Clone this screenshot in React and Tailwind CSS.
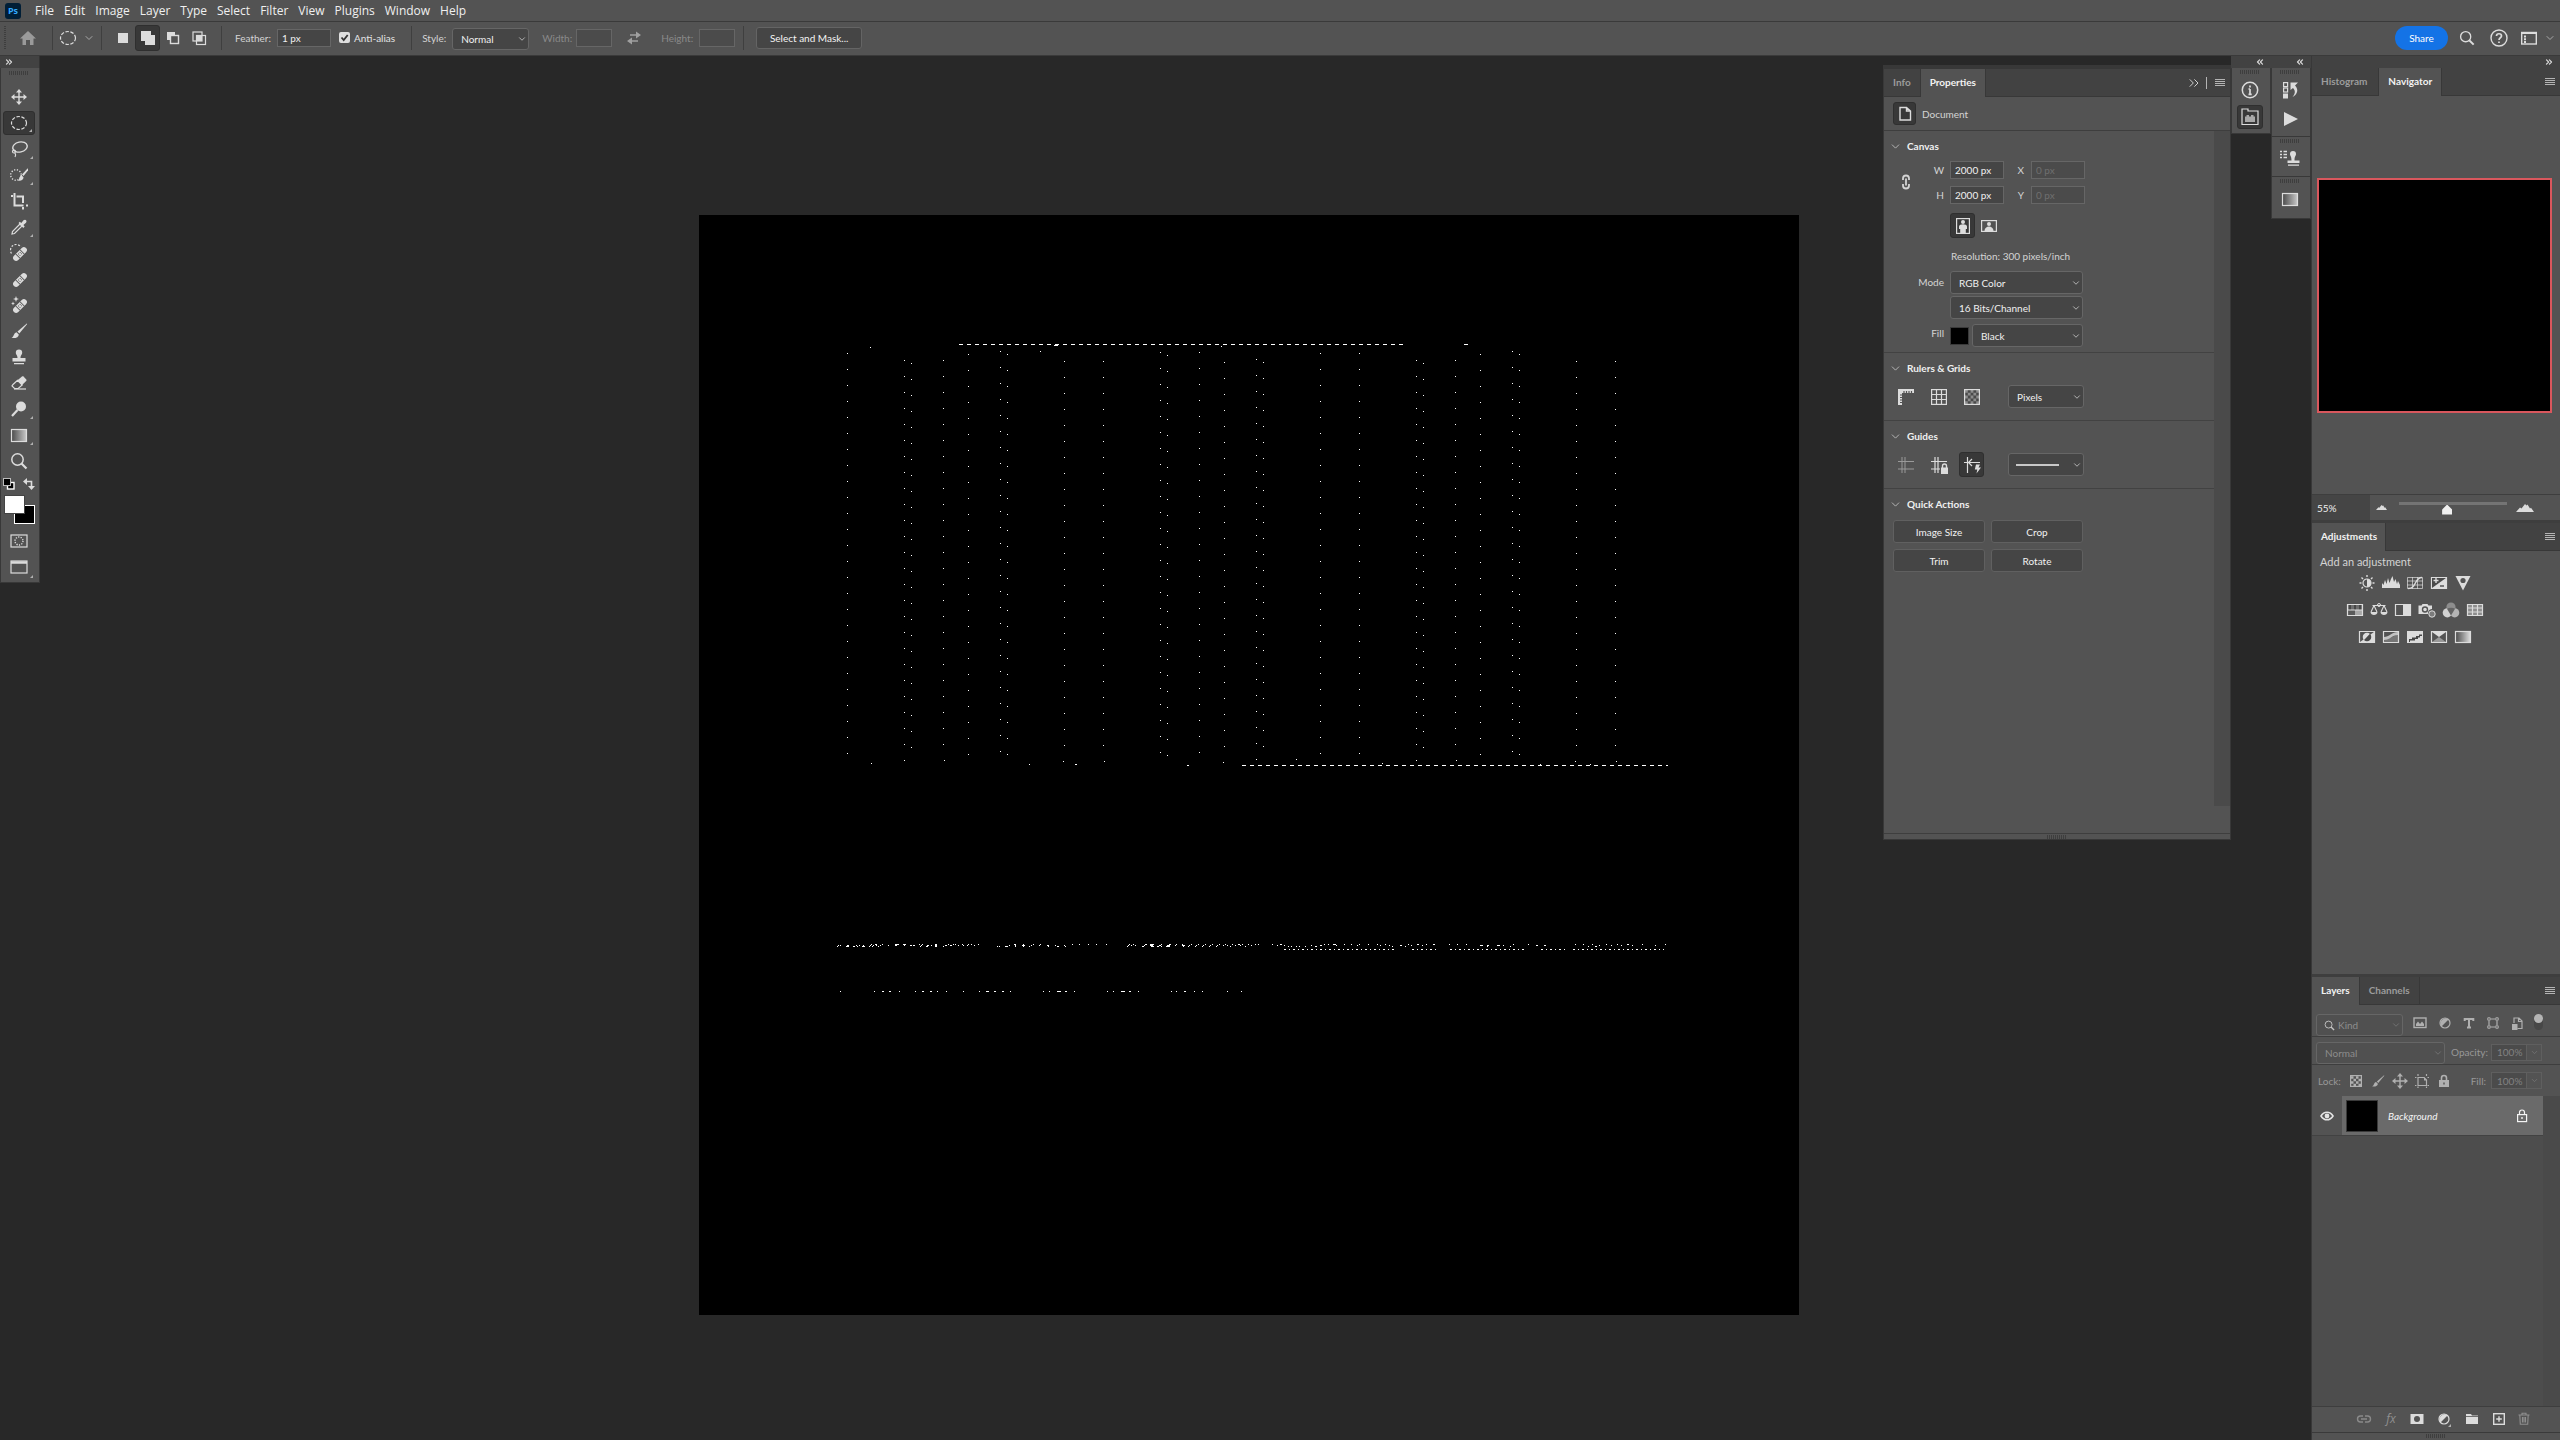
import { ChevronDown, ChevronsLeft, ChevronsRight } from 'lucide-react';

const MENUS = ['File', 'Edit', 'Image', 'Layer', 'Type', 'Select', 'Filter', 'View', 'Plugins', 'Window', 'Help'];

/* ---------- icons ---------- */

const Svg = ({ w = 18, h = 18, box, className = '', children }) => (
  <svg
    width={w}
    height={h}
    viewBox={box || `0 0 ${w} ${h}`}
    fill="none"
    stroke="currentColor"
    strokeWidth="1.4"
    className={`block shrink-0 ${className}`}
    aria-hidden="true"
  >
    {children}
  </svg>
);

const MoveIcon = () => (
  <Svg>
    <path d="M9 3v12M3 9h12" />
    <path d="M9 1l3 3.5H6zM9 17l3-3.5H6zM1 9l3.5-3v6zM17 9l-3.5-3v6z" fill="currentColor" stroke="none" />
  </Svg>
);

const EllipseIcon = () => (
  <Svg>
    <ellipse cx="9" cy="9" rx="7.5" ry="6.5" strokeDasharray="3.4 1.6" strokeWidth="1.2" />
  </Svg>
);

const LassoIcon = () => (
  <Svg>
    <ellipse cx="10" cy="7" rx="7.3" ry="5" transform="rotate(-12 10 7)" />
    <path d="M4 10c-2 0-2 3 0 3s2-3 0-3M5 13c1 1.5 1 2.5 0 4" strokeWidth="1.2" />
  </Svg>
);

const QuickSelectIcon = () => (
  <Svg>
    <circle cx="6" cy="9" r="5.3" strokeDasharray="1.2 1.6" />
    <path d="M17.5 2.5l-5.5 6 1.5 1.5 5-6c.5-1-.2-1.8-1-1.5z" fill="currentColor" stroke="none" />
    <path d="M11.5 9.2l2 2c0 2.5-2.5 4-5.5 3.3 1.5-.8 1.2-4.8 3.5-5.3z" fill="currentColor" stroke="none" />
  </Svg>
);

const CropIcon = () => (
  <Svg>
    <path d="M1 4h2M4.5 1v12.5h9M16 13.5h2M6.5 4.5H13V11M13 15v2.5" strokeWidth="2" />
  </Svg>
);

const DropperIcon = () => (
  <Svg>
    <path d="M10 6L2.5 13.5 2 16l2.5-.5L12 8z" strokeWidth="1.2" />
    <path d="M8.5 5l1.3-1.3 1.5 1.3 2.2-2.7c2-1.5 4 .5 2.5 2.5l-2.6 2.3 1.3 1.4-1.4 1.4z" fill="currentColor" stroke="none" />
  </Svg>
);

const Bandage = () => (
  <g transform="rotate(-45 10 10)">
    <rect x="1.5" y="7" width="17" height="6" rx="3" fill="currentColor" stroke="none" />
    <path d="M7 7v6M13 7v6" stroke="#535353" strokeWidth="1" />
    <path d="M8.5 9h1M10.7 9h1M8.5 11h1M10.7 11h1" stroke="#535353" strokeWidth="1" />
  </g>
);

const SpotHealIcon = () => (
  <Svg>
    <path d="M1.5 9.5a5.5 5.5 0 0 1 9.5-6.5" strokeDasharray="2 1.5" strokeWidth="1.2" />
    <Bandage />
  </Svg>
);

const HealIcon = () => (
  <Svg>
    <Bandage />
  </Svg>
);

const RemoveIcon = () => (
  <Svg>
    <Bandage />
    <path d="M6 0l.8 2.2L9 3l-2.2.8L6 6l-.8-2.2L3 3l2.200-.8zM3 5.5l.6 1.4 1.4.6-1.4.6L3 9.5l-.6-1.4L1 7.5l1.4-.6z" fill="currentColor" stroke="none" />
  </Svg>
);

const BrushIcon = ({ size = 18 }) => (
  <Svg w={size} h={size} box="0 0 18 18">
    <path d="M16.8 1.5L7.5 9.5l1.8 2 7.5-9c.4-.6.3-1 0-1z" fill="currentColor" stroke="none" />
    <path d="M6.5 10.2l2.3 2.3c0 2.8-3 4-7.3 3.5 2.5-1 2-5 5-5.8z" fill="currentColor" stroke="none" />
  </Svg>
);

const StampIcon = () => (
  <Svg>
    <path d="M9 1.5a3.2 3.2 0 0 1 3.2 3.2c0 1.8-1.7 2.2-1.7 5.3H7.5c0-3.1-1.7-3.5-1.7-5.3A3.2 3.2 0 0 1 9 1.5zM2.5 10h13v3.5h-13zM4 15h10v1.2H4z" fill="currentColor" stroke="none" />
  </Svg>
);

const EraserIcon = () => (
  <Svg>
    <path d="M3 10.5l4.5-4.2 4.7 4.7-4 3.5H4.5L2 12z" strokeWidth="1.2" />
    <path d="M7.5 6.3L12 2.5c.5-.4 1-.4 1.5 0l2.8 3c.4.5.4 1-.1 1.5L12 11z" fill="currentColor" stroke="none" />
    <path d="M4 15h12" strokeWidth="1.2" />
  </Svg>
);

const DodgeIcon = () => (
  <Svg>
    <circle cx="11" cy="6.5" r="5" fill="currentColor" stroke="none" />
    <path d="M7.5 10L2 16" strokeWidth="2.2" />
  </Svg>
);

const GradientIcon = ({ id }) => (
  <Svg>
    <defs>
      <linearGradient id={id}>
        <stop offset="0" stopColor="#4a4a4a" />
        <stop offset="1" stopColor="#c8c8c8" />
      </linearGradient>
    </defs>
    <rect x="1.5" y="3.5" width="15" height="12" fill={`url(#${id})`} strokeWidth="1.2" />
  </Svg>
);

const MagnifierIcon = ({ size = 18 }) => (
  <Svg w={size} h={size} box="0 0 18 18">
    <circle cx="7.5" cy="7.5" r="5.7" strokeWidth="1.5" />
    <path d="M11.5 11.5l5 5" strokeWidth="2.2" />
  </Svg>
);

const MaskModeIcon = () => (
  <Svg>
    <rect x="1" y="3" width="16" height="12" strokeWidth="1.2" />
    <circle cx="9" cy="9" r="4" strokeDasharray="1.2 1.3" />
  </Svg>
);

const ScreenIcon = () => (
  <Svg>
    <rect x="1" y="3" width="16" height="12" strokeWidth="1.2" />
    <path d="M1 4.5h16" strokeWidth="2.5" />
  </Svg>
);

const HomeIcon = () => (
  <Svg w={18} h={16}>
    <path d="M9 1L1 8.5h2.5V15H7v-5h4v5h3.5V8.5H17z" fill="currentColor" stroke="none" />
  </Svg>
);

const NewSelIcon = () => (
  <Svg w={16} h={16}>
    <rect x="3" y="3" width="10" height="10" fill="currentColor" stroke="none" />
  </Svg>
);
const AddSelIcon = () => (
  <Svg w={16} h={16}>
    <path d="M1 1h10v4h4v10H5v-4H1z" fill="currentColor" stroke="none" />
  </Svg>
);
const SubSelIcon = () => (
  <Svg w={16} h={16}>
    <path d="M2 2h8v3H5v5H2z" fill="currentColor" stroke="none" />
    <rect x="5.5" y="5.5" width="8" height="8" />
  </Svg>
);
const CrossSelIcon = () => (
  <Svg w={16} h={16}>
    <rect x="2" y="2" width="9" height="9" strokeWidth="1.2" />
    <rect x="5.5" y="5.5" width="9" height="9" strokeWidth="1.2" />
    <rect x="6" y="6" width="5" height="5" fill="currentColor" stroke="none" />
  </Svg>
);

const SwapIcon = () => (
  <Svg w={16} h={14}>
    <path d="M4 4h7M12 10H5" strokeWidth="1.6" />
    <path d="M10 0.5l5 3.5-5 3.5zM6 6.5L1 10l5 3.5z" fill="currentColor" stroke="none" />
  </Svg>
);

const HelpIcon = () => (
  <Svg>
    <circle cx="9" cy="9" r="8" strokeWidth="1.4" />
    <path d="M6.5 7c0-3 5-3 5 0 0 1.800-2.500 1.800-2.500 4M9 12.500v1.500" strokeWidth="1.7" />
  </Svg>
);

const WorkspaceIcon = () => (
  <Svg w={16} h={14}>
    <rect x="0.7" y="1.5" width="14.6" height="11.5" />
    <path d="M1 2h14" strokeWidth="2" />
    <path d="M4 4.5v2M4 7.2v2M4 9.9v2" strokeWidth="2" />
  </Svg>
);

const MenuLines = () => (
  <Svg w={10} h={8}>
    <path d="M0 .5h10M0 2.5h10M0 4.5h10M0 6.5h10" strokeWidth="1" shapeRendering="crispEdges" />
  </Svg>
);

const InfoIcon = () => (
  <Svg>
    <circle cx="9" cy="9" r="7.7" strokeWidth="1.5" />
    <path d="M9 8v5.5M7.5 8H9M7.5 13.3h3.2M9 4.5v2" strokeWidth="1.7" />
  </Svg>
);

const BricksIcon = () => (
  <Svg>
    <path d="M1 1h6v2h10v13.5H1z" strokeWidth="1.2" />
    <path d="M4 14V8.5h1.5V7H8v1.5h2V7h2.5v1.5H14V14z" fill="#a8a8a8" stroke="none" />
  </Svg>
);

const HistoryIcon = () => (
  <Svg>
    <rect x="2.6" y="1.6" width="4" height="4" strokeWidth="1.2" />
    <rect x="2.6" y="7" width="4" height="4" strokeWidth="1.2" />
    <rect x="2" y="12.5" width="5" height="5" fill="currentColor" stroke="none" />
    <path d="M9.5 1.5h7.5L14 4.5c4 4 2.5 9-2.5 11.5 3-3.5 3-6.5.5-9l-2.5 2z" fill="currentColor" stroke="none" />
  </Svg>
);

const PlayIcon = () => (
  <Svg>
    <path d="M3 2l14 7-14 7z" fill="currentColor" stroke="none" />
  </Svg>
);

const CloneSourceIcon = () => (
  <Svg w={22} h={18}>
    <path d="M1 2.5h2M4.5 2.5h3.5M1 5.5h2M4.5 5.5H8M1 8.5h2M4.5 8.5H8" />
    <path d="M14 2a3 3 0 0 1 3 3c0 2-1.5 2-1.5 6.5h5V14h-12v-2.5H12.5C12.5 7 11 7 11 5a3 3 0 0 1 3-3zM9 15.5h11v1.2H9z" fill="currentColor" stroke="none" />
  </Svg>
);

const PageIcon = () => (
  <Svg w={14} h={16}>
    <path d="M2 1.5h6.5L12.5 5v9H2zM8.5 1.5V5h4" />
  </Svg>
);

const ChainIcon = () => (
  <Svg w={10} h={16}>
    <path d="M2 6V4.5a3 3 0 0 1 6 0V6M2 10v1.5a3 3 0 0 0 6 0V10" strokeWidth="1.8" />
    <path d="M5 4.5v7" strokeWidth="1.8" />
  </Svg>
);

const PortraitIcon = () => (
  <Svg w={16} h={18}>
    <rect x="1.6" y="1.6" width="12.8" height="14.8" strokeWidth="1.2" />
    <circle cx="8" cy="5" r="2" fill="currentColor" stroke="none" />
    <path d="M4 9.500c0-3 8-3 8 0V12h-1.2v4H5.2v-4H4z" fill="currentColor" stroke="none" />
  </Svg>
);

const LandscapeIcon = () => (
  <Svg w={18} h={14}>
    <rect x="1.6" y="1.6" width="14.8" height="10.8" strokeWidth="1.2" />
    <circle cx="9" cy="5" r="2" fill="currentColor" stroke="none" />
    <path d="M4.5 12c0-6 9-6 9 0z" fill="currentColor" stroke="none" />
  </Svg>
);

const RulerIcon = () => (
  <Svg>
    <path d="M1 1h16v4H5v12H1z" fill="currentColor" stroke="none" />
    <path d="M7 3v2M9.5 3v2M12 3v2M14.5 3v2M3 7h2M3 9.5h2M3 12h2M3 14.5h2" stroke="#535353" strokeWidth="1.2" />
  </Svg>
);

const GridIcon = () => (
  <Svg>
    <rect x="1.6" y="1.6" width="14.8" height="14.8" strokeWidth="1.2" />
    <path d="M6.5 1v16M11.5 1v16M1 6.5h16M1 11.5h16" strokeWidth="1.2" />
  </Svg>
);

const CheckerIcon = () => (
  <Svg>
    <rect x="2" y="2" width="14" height="14" fill="#4a4a4a" stroke="none" />
    <path d="M2 3.4h14M2 9h14M2 14.6h14" stroke="#8c8c8c" strokeWidth="2.8" strokeDasharray="2.8 2.8" />
    <path d="M4.8 6.2H16M4.8 11.8H16" stroke="#8c8c8c" strokeWidth="2.8" strokeDasharray="2.8 2.8" />
    <rect x="1.6" y="1.6" width="14.8" height="14.8" strokeWidth="1.2" />
  </Svg>
);

const GuidesIcon = () => (
  <Svg>
    <path d="M5 1v16M8 1v16M1 5.5h16M1 13h16" strokeWidth="1" />
  </Svg>
);

const GuidesLockIcon = () => (
  <Svg>
    <path d="M5 1v16M8 1v16M1 5.5h16M1 13h9" strokeWidth="1.2" />
    <path d="M11 11.5h7V18h-7z" fill="currentColor" stroke="none" />
    <path d="M12.5 12v-2a2 2 0 0 1 4 0v2" />
  </Svg>
);

const SmartGuidesIcon = () => (
  <Svg>
    <path d="M4.5 1v16M1 6.5h16M9 3L5.5 6.5 9 10" strokeWidth="1.2" />
    <path d="M13 8.5h4l-1.5 3H18l-4.5 6 .8-4h-2.500z" fill="currentColor" stroke="none" />
  </Svg>
);

const Mountains = ({ w, h }) => (
  <Svg w={w} h={h} box="0 0 18 8">
    <path d="M0 8l4-4.5 1.5 1L9 0l1.5 1.500L11.500.5l2.500 4 1-.8L18 8z" fill="currentColor" stroke="none" />
  </Svg>
);

const EyeIcon = () => (
  <Svg w={14} h={10}>
    <path d="M1 5c3-5 9-5 12 0-3 5-9 5-12 0z" strokeWidth="1.6" />
    <circle cx="7" cy="5" r="2.4" fill="currentColor" stroke="none" />
  </Svg>
);

const LockSolid = () => (
  <Svg w={12} h={14}>
    <path d="M1 6h10v7H1z" fill="currentColor" stroke="none" />
    <path d="M3.5 6V4a2.5 2.5 0 0 1 5 0v2" strokeWidth="1.6" />
    <path d="M6 8.5v2" stroke="#535353" />
  </Svg>
);

const LockOutline = () => (
  <Svg w={12} h={14}>
    <rect x="1.6" y="5.6" width="9" height="7" strokeWidth="1.2" />
    <path d="M3.5 5.5V3.5a2.5 2.5 0 0 1 5 0v2" strokeWidth="1.2" />
    <path d="M6 8v2" />
  </Svg>
);

const Checker = () => (
  <Svg w={12} h={12}>
    <rect x=".6" y=".6" width="10.8" height="10.8" strokeWidth="1.2" />
    <path d="M1 2.5h10M1 7.5h10" strokeWidth="2.5" strokeDasharray="2.5 2.5" />
    <path d="M3.5 5H11M3.5 10H11" strokeWidth="2.5" strokeDasharray="2.5 2.5" />
  </Svg>
);

const ArtboardLockIcon = () => (
  <Svg w={14} h={14}>
    <path d="M3 0v2M3 3.5h6L11.5 6v5.5H3zM0 3.5h1.5M0 11.5h1.5M3 12.5V14M11.5 12.5V14M12.5 11.5H14M11.5 0v2M12.5 3.5H14" strokeWidth="1.2" />
    <path d="M9 3v3.5h3z" fill="currentColor" stroke="none" />
  </Svg>
);

const PictureIcon = () => (
  <Svg w={14} h={12}>
    <rect x="1" y="1" width="12" height="9.5" />
    <path d="M3 9V7l2-2.5L7 7l2-2.5L11 7v2z" fill="currentColor" stroke="none" />
  </Svg>
);

const HalfCircleIcon = () => (
  <Svg w={12} h={12}>
    <circle cx="6" cy="6" r="5" strokeWidth="1.2" />
    <path d="M2.5 9.5l7-7a5 5 0 0 0-7 7z" fill="currentColor" stroke="none" />
  </Svg>
);

const TypeIcon = () => (
  <Svg w={12} h={12}>
    <path d="M1.7 4V2h8.6v2M6 2v9M4 10.5h4" strokeWidth="2" />
  </Svg>
);

const ShapeIcon = () => (
  <Svg w={12} h={12}>
    <path d="M2 4v4M10 4v4M4 2h4M4 10h4" strokeWidth="1.2" />
    <path d="M.8.8h2.4v2.4H.8zM8.8.8h2.4v2.4H8.8zM.8 8.8h2.4v2.4H.8zM8.8 8.8h2.4v2.4H8.8z" strokeWidth="1" />
  </Svg>
);

const SmartObjectIcon = () => (
  <Svg w={12} h={13}>
    <path d="M3 6V1h5l3 3v7.5H6.5M7.5 1v3.5H11" strokeWidth="1.2" />
    <path d="M1 7h5.500v6H1z" fill="currentColor" stroke="none" />
  </Svg>
);

/* adjustment icons, all on an 18 x 14 grid */

const Adj = ({ children }) => (
  <Svg w={18} h={16} box="0 -1 18 16">
    {children}
  </Svg>
);

const ADJUSTMENTS = [
  [
    ['Brightness/Contrast', <Adj>
      <circle cx="9" cy="7" r="4" strokeWidth="1.2" />
      <path d="M9 3a4 4 0 0 1 0 8z" fill="currentColor" stroke="none" />
      <path d="M9-1v2M9 13v2M1.5 7h2M14.5 7h2M3.5 1.5L5 3M13 11l1.5 1.5M14.5 1.5L13 3M5 11l-1.500 1.500" />
    </Adj>],
    ['Levels', <Adj>
      <path d="M0 12V7l1.5 2L3 4l1.5 4L6 2l1.5 5L9 3l1.5-3L12 6l1.5-3L15 8l1-3 2 4v3z" fill="currentColor" stroke="none" />
    </Adj>],
    ['Curves', <Adj>
      <path d="M1.5 1.5h15v11h-15zM6.5 1v12M11.5 1v12M1 5h16M1 9h16" strokeWidth="1" opacity=".7" />
      <path d="M2 12.5c9 0 6-11 14-11" />
    </Adj>],
    ['Exposure', <Adj>
      <path d="M1.5 1.5h15v11h-15z" strokeWidth="1.2" />
      <path d="M2 2v10L16 2z" fill="#4a4a4a" stroke="none" />
      <path d="M16 2v10H2z" fill="currentColor" stroke="none" />
      <path d="M3.5 4.5h5M6 2v5" />
      <path d="M10 10h4" stroke="#4a4a4a" />
    </Adj>],
    ['Vibrance', <Adj>
      <path d="M1.5 0h15L9 14.5z" fill="currentColor" stroke="none" />
      <circle cx="9" cy="4.5" r="2.6" fill="#535353" stroke="none" />
    </Adj>],
  ],
  [
    ['Hue/Saturation', <Adj>
      <rect x="1" y="1" width="16" height="6" fill="#6e6e6e" stroke="none" />
      <path d="M4 1v6M9 1v6M14 1v6" stroke="#474747" strokeWidth="2" />
      <rect x="2" y="7" width="7" height="5" fill="#5a5a5a" stroke="none" />
      <rect x="9" y="7" width="7" height="5" fill="#a8a8a8" stroke="none" />
      <path d="M1.5 1.5h15v11h-15zM1 7h16" strokeWidth="1.2" />
    </Adj>],
    ['Color Balance', <Adj>
      <path d="M2.5 2.5h13M4 2.5L1 9M4 2.5L7 9M14 2.5L11 9M14 2.5l3 6.5" strokeWidth="1.1" />
      <circle cx="9" cy="2" r="1.5" strokeWidth="1" />
      <path d="M.5 9h7c0 4-7 4-7 0zM10.5 9h7c0 4-7 4-7 0z" fill="currentColor" stroke="none" />
    </Adj>],
    ['Black & White', <Adj>
      <path d="M1.5 1.5h15v11h-15z" strokeWidth="1.2" />
      <path d="M9 2h7v10H9z" fill="currentColor" stroke="none" />
    </Adj>],
    ['Photo Filter', <Adj>
      <path d="M.5 2.5h3l1-1.5h5l1 1.5h3.5V6a4 4 0 0 0-4 5H.5z" fill="currentColor" stroke="none" />
      <circle cx="7" cy="6.5" r="2.5" stroke="#535353" />
      <circle cx="14" cy="11" r="3.2" fill="#7b7b7b" strokeWidth="1" />
    </Adj>],
    ['Channel Mixer', <Adj>
      <circle cx="9" cy="4" r="4.6" fill="#8d8d8d" stroke="none" />
      <circle cx="5.3" cy="9.8" r="4.6" fill="#d2d2d2" stroke="none" />
      <circle cx="12.7" cy="9.8" r="4.6" fill="#b4b4b4" stroke="none" />
      <path d="M4.8 5.5c2.5-1 6-1 8.4 0L9 12.5z" fill="#646464" stroke="none" />
    </Adj>],
    ['Color Lookup', <Adj>
      <path d="M2 1h14v12H2z" fill="#8d8d8d" stroke="none" />
      <path d="M1.5 1.5h15v11h-15zM6.5 1v12M11.5 1v12M1 5h16M1 9h16" strokeWidth="1.2" />
    </Adj>],
  ],
  [
    ['Invert', <Adj>
      <path d="M1.5 1.5h15v11h-15z" strokeWidth="1.2" />
      <path d="M16 2v10H2z" fill="currentColor" stroke="none" />
      <path d="M6 10a4 4 0 0 1 6-6z" fill="currentColor" stroke="none" />
      <path d="M6 10a4 4 0 0 0 6-6z" fill="#4a4a4a" stroke="none" />
    </Adj>],
    ['Posterize', <Adj>
      <path d="M2 12c0-4 7-3 14-8v8z" fill="#767676" stroke="none" />
      <path d="M2 7c5 0 8-5 14-5v3C10 5 8 10 2 10z" fill="#c2c2c2" stroke="none" />
      <path d="M1.5 1.5h15v11h-15z" strokeWidth="1.2" />
    </Adj>],
    ['Threshold', <Adj>
      <path d="M1 1h16v12H1z" fill="currentColor" stroke="none" />
      <path d="M3 9h3V7.5h4V6h3V4.5h3V6h-2v1.5h-2V9H9v1.5H4V12H3z" fill="#454545" stroke="none" />
    </Adj>],
    ['Selective Color', <Adj>
      <path d="M2 2l7 5 7-5z" fill="#dcdcdc" stroke="none" />
      <path d="M2 12l7-5 7 5z" fill="#999" stroke="none" />
      <path d="M1.5 1.5h15v11h-15z" strokeWidth="1.2" />
    </Adj>],
    ['Gradient Map', <Adj>
      <defs>
        <linearGradient id="gradMap">
          <stop offset="0" stopColor="#4a4a4a" />
          <stop offset="1" stopColor="#e0e0e0" />
        </linearGradient>
      </defs>
      <rect x="1.5" y="1.5" width="15" height="11" fill="url(#gradMap)" strokeWidth="1.2" />
    </Adj>],
  ],
];

/* ---------- small controls ---------- */

const Grip = ({ className = '' }) => (
  <div className={`h-1 w-5 bg-[repeating-linear-gradient(90deg,#3e3e3e_0_1px,transparent_1px_2px)] ${className}`} />
);

const IconButton = ({ label, active, corner, className = '', children }) => (
  <button
    aria-label={label}
    className={`relative flex shrink-0 items-center justify-center rounded-[3px] text-[#dcdcdc] ${
      active ? 'border border-[#2f2f2f] bg-[#383838]' : ''
    } ${className}`}
  >
    {children}
    {corner && (
      <span className="absolute right-[2px] bottom-[2px] border-b-3 border-l-3 border-b-[#b0b0b0] border-l-transparent" />
    )}
  </button>
);

const Select = ({ label, value, dim, className = '', pad = 'pl-2', children }) => (
  <div className={`relative shrink-0 ${className}`}>
    <select
      aria-label={label}
      className={`h-full w-full appearance-none rounded-[3px] border border-[#666] outline-none ${pad} ${
        dim ? 'bg-[#505050] text-[#8d8d8d]' : 'bg-[#454545] text-[#f0f0f0]'
      }`}
    >
      <option>{value}</option>
    </select>
    {children}
    <ChevronDown
      size={10}
      strokeWidth={2}
      className={`pointer-events-none absolute top-1/2 right-[2px] -translate-y-1/2 ${dim ? 'text-[#777]' : 'text-[#c8c8c8]'}`}
    />
  </div>
);

const TextBox = ({ id, value, disabled, className = '' }) => (
  <input
    id={id}
    defaultValue={value}
    disabled={disabled}
    className={`h-[18px] shrink-0 border border-[#666] pl-1 outline-none ${
      disabled ? 'bg-[#4b4b4b] text-[#6f6f6f]' : 'bg-[#454545] text-[#f0f0f0]'
    } ${className}`}
  />
);

const Tab = ({ active, className = 'pr-2 pl-[9px]', children }) => (
  <button
    className={`h-full border-r border-[#383838] pb-[2px] font-bold ${
      active ? 'bg-[#535353] text-[#f2f2f2]' : 'border-b text-[#9c9c9c]'
    } ${className}`}
  >
    {children}
  </button>
);

const TabBar = ({ children, extra }) => (
  <div className="flex h-7 shrink-0 items-stretch bg-[#424242]">
    {children}
    <div className="flex flex-1 items-center justify-end gap-2 border-b border-[#383838] pr-[5px] text-[#b4b4b4]">
      {extra}
      <button aria-label="Panel menu">
        <MenuLines />
      </button>
    </div>
  </div>
);

const Separator = () => <div className="h-6 w-px shrink-0 bg-[#3f3f3f]" />;

/* ---------- bars ---------- */

const MenuBar = () => (
  <nav className="flex h-[22px] shrink-0 items-center gap-[10px] border-b border-[#3a3a3a] bg-[#535353] pl-[5px] font-['Open_Sans',sans-serif] text-[12px] leading-4 text-[#f0f0f0]">
    <div className="mr-1 flex h-4 w-4 items-center justify-center rounded-[3px] bg-[#001e36] text-[9px] font-bold text-[#31a8ff]">
      Ps
    </div>
    {MENUS.map((m) => (
      <button key={m}>{m}</button>
    ))}
  </nav>
);

const OptionsBar = () => (
  <header className="flex h-[34px] shrink-0 items-center border-b border-[#3a3a3a] bg-[#535353] pb-[2px] text-[#d4d4d4]">
    <div className="ml-1 h-6 w-[2px] bg-[repeating-linear-gradient(180deg,#3e3e3e_0_1px,transparent_1px_2px)]" />
    <IconButton label="Home" className="ml-2 w-7">
      <span className="text-[#9a9a9a]"><HomeIcon /></span>
    </IconButton>
    <div className="ml-[10px] flex items-center">
      <Separator />
      <IconButton label="Elliptical marquee" className="ml-[6px]"><EllipseIcon /></IconButton>
      <ChevronDown size={12} className="ml-[6px] text-[#a8a8a8]" />
      <div className="w-[6px]" />
      <Separator />
    </div>
    <div className="flex items-center pl-2">
      <IconButton label="New selection" className="h-[26px] w-[25px]"><NewSelIcon /></IconButton>
      <IconButton label="Add to selection" active className="h-[26px] w-[25px]"><AddSelIcon /></IconButton>
      <IconButton label="Subtract from selection" className="h-[26px] w-[26px]"><SubSelIcon /></IconButton>
      <IconButton label="Intersect with selection" className="h-[26px] w-[26px]"><CrossSelIcon /></IconButton>
    </div>
    <div className="ml-[9px] flex items-center">
      <Separator />
      <label htmlFor="feather" className="w-[55px] pl-[13px]">Feather:</label>
      <TextBox id="feather" value="1 px" className="w-[54px]" />
      <label className="ml-2 flex items-center gap-1 text-[#e4e4e4]">
        <span className="relative flex h-[11px] w-[11px]">
          <input type="checkbox" defaultChecked className="h-[11px] w-[11px] appearance-none rounded-[2px] bg-[#dedede]" />
          <svg viewBox="0 0 11 11" className="pointer-events-none absolute inset-0" fill="none" stroke="#333" strokeWidth="1.8">
            <path d="M2.5 5.5l2.2 2.5 4-5" />
          </svg>
        </span>
        Anti-alias
      </label>
    </div>
    <div className="ml-4 flex items-center">
      <Separator />
      <span className="w-[40px] pl-[10px]">Style:</span>
      <Select label="Style" value="Normal" className="mt-[3px] h-[22px] w-[77px]" />
      <label htmlFor="selw" className="w-[47px] pl-[13px] text-[#8a8a8a]">Width:</label>
      <TextBox id="selw" disabled className="w-9" />
      <IconButton label="Swap width and height" className="mx-[14px]">
        <span className="text-[#a0a0a0]"><SwapIcon /></span>
      </IconButton>
      <label htmlFor="selh" className="w-[43px] pl-[5px] text-[#8a8a8a]">Height:</label>
      <TextBox id="selh" disabled className="w-9" />
    </div>
    <div className="ml-2 flex items-center gap-3">
      <Separator />
      <button className="h-[22px] w-[106px] rounded-[3px] border border-[#646464] bg-[#454545] text-[#f4f4f4]">
        Select and Mask...
      </button>
    </div>
    <div className="ml-auto flex items-center pr-1">
      <button className="h-6 w-[53px] rounded-full bg-[#1473e6] text-white">Share</button>
      <IconButton label="Search" className="ml-[11px]"><MagnifierIcon size={16} /></IconButton>
      <IconButton label="Help" className="ml-[15px]"><HelpIcon /></IconButton>
      <IconButton label="Workspace" className="ml-[13px]"><WorkspaceIcon /></IconButton>
      <ChevronDown size={12} className="ml-[7px] text-[#a8a8a8]" />
    </div>
  </header>
);

const TOOLS = [
  ['Move', <MoveIcon />],
  ['Elliptical Marquee', <EllipseIcon />, true],
  ['Lasso', <LassoIcon />, true],
  ['Quick Selection', <QuickSelectIcon />, true],
  ['Crop', <CropIcon />],
  ['Eyedropper', <DropperIcon />, true],
  ['Spot Healing', <SpotHealIcon />],
  ['Healing Brush', <HealIcon />],
  ['Remove', <RemoveIcon />],
  ['Brush', <BrushIcon />],
  ['Clone Stamp', <StampIcon />],
  ['Eraser', <EraserIcon />],
  ['Dodge', <DodgeIcon />, true],
  ['Gradient', <GradientIcon id="gradTool" />, true],
  ['Zoom', <MagnifierIcon />],
];

const ToolBar = () => (
  <aside className="w-10 shrink-0">
    <div className="flex h-3 items-center border-r border-[#333] bg-[#424242] pl-1 text-[#d8d8d8]">
      <ChevronsRight size={10} strokeWidth={3} />
    </div>
    <div className="flex flex-col items-center border-x border-b border-[#383838] bg-[#535353] pt-[3px] pr-[2px] pb-[2px]">
      <Grip />
      <div className="mt-[10px] flex w-8 flex-col gap-[2px]">
        {TOOLS.map(([name, icon, corner]) => (
          <IconButton key={name} label={name} corner={corner} active={name === 'Elliptical Marquee'} className="h-6 w-8">
            {icon}
          </IconButton>
        ))}
      </div>
      <div className="flex h-[22px] w-8 items-center justify-between">
        <button aria-label="Default colors">
          <Svg w={12} h={12}>
            <rect x="4.5" y="4.5" width="6.5" height="6.5" fill="#000" stroke="#fff" />
            <rect x=".5" y=".5" width="7" height="7" fill="#000" stroke="#bbb" strokeWidth="1" />
          </Svg>
        </button>
        <button aria-label="Switch colors" className="text-[#dcdcdc]">
          <Svg w={12} h={12}>
            <path d="M3 3.5h5.5V9" strokeWidth="1.6" />
            <path d="M4 0v7L0 3.5zM5 8h7l-3.5 4z" fill="currentColor" stroke="none" />
          </Svg>
        </button>
      </div>
      <div className="grid h-[29px] w-[31px] grid-cols-[10px_11px_10px] grid-rows-[10px_9px_10px]">
        <button aria-label="Background color" className="col-start-2 col-end-4 row-start-2 row-end-4 border border-white bg-black" />
        <button aria-label="Foreground color" className="col-start-1 col-end-3 row-start-1 row-end-3 border border-[#444] bg-white" />
      </div>
      <div className="flex w-8 flex-col pt-1">
        <IconButton label="Quick mask" className="h-[26px] w-8"><MaskModeIcon /></IconButton>
        <IconButton label="Screen mode" corner className="h-[26px] w-8"><ScreenIcon /></IconButton>
      </div>
    </div>
  </aside>
);

/* ---------- artboard with the selection outline ---------- */

// x, first y, number of dots (one every 16 px)
const COLUMNS = [
  [148, 138, 26], [205, 145, 26], [212, 148, 25], [244, 145, 25], [269, 139, 26], [301, 136, 26], [308, 139, 26],
  [365, 146, 25], [404, 146, 25], [461, 137, 26], [468, 140, 26], [500, 137, 26], [525, 147, 25], [557, 144, 26],
  [564, 147, 25], [621, 138, 26], [660, 138, 26], [717, 145, 26], [724, 148, 25], [756, 145, 25], [781, 139, 26],
  [813, 136, 26], [820, 139, 26], [877, 146, 25], [916, 146, 25],
];

// row y -> x positions, or [x, width]
const ROWS = [
  [129, [[765, 4]]],
  [130, [[355, 4]]],
  [131, [522]],
  [132, [171]],
  [136, [341]],
  [544, [597]],
  [545, [245, 757]],
  [546, [364, 405, 876, 917]],
  [547, [524]],
  [548, [172, 683]],
  [549, [330, [376, 2], 841, 891]],
  [550, [[488, 2]]],
  [729, [
    172, [176, 2], 183, [196, 4], [204, 3], 220, 223, [236, 2], 249, 254, 256, 263, 269, 272, 279, [315, 2], 324, 334,
    341, 373, 380, 389, 397, 407, 430, 434, [446, 2], [451, 4], 462, [470, 2], 477, 483, 492, 499, 506, 513, 520, 526,
    533, [539, 2], 543, 549, 556, 559, 573, [581, 2], 625, 629, [634, 3], 645, 652, 660, 669, 678, 686, 709, [718, 2],
    727, [734, 2], 750, 758, 767, 814, 829, 876, 884, 893, 907, 918, [928, 2], 943, 966,
  ]],
  [730, [
    139, 141, [148, 2], 157, 160, 164, 171, 174, 177, 181, 189, [196, 2], 205, [211, 2], [214, 2], 222, [228, 2], 232,
    [236, 2], [246, 2], [251, 2], 259, 264, 268, 275, 310, 316, [323, 3], 332, 340, [348, 2], 356, 365, 429, 432, 436,
    445, [451, 3], [460, 2], [468, 3], 476, [483, 3], 490, 497, 504, 511, 518, 524, 528, 536, 541, 552, 578, 585, 612,
    [621, 2], 637, 658, 681, 690, [701, 2], 712, 723, [781, 3], [788, 2], [798, 3], 804, [837, 2], [845, 2], 900, 912,
    922, 933, 956,
  ]],
  [731, [
    138, [147, 3], [154, 2], 158, [163, 3], 170, 173, 179, 221, [227, 2], [236, 2], 244, 298, 300, [306, 3], 316, 324,
    330, 349, [358, 2], 366, 428, [443, 2], [452, 3], [458, 2], 462, [467, 4], 484, 489, 496, 503, 510, 517, 531, 546,
    589, 592, 597, 600, 606, [616, 2], 693, 706, 788, 811, 889, [896, 2],
  ]],
  [776, [
    141, 175, [183, 2], [190, 2], 200, 216, [223, 2], [231, 2], 238, 247, 264, 280, [287, 3], [295, 2], [303, 2], 311,
    344, 350, [358, 4], [366, 2], 375, 408, 414, [422, 4], [430, 2], 439, 472, 477, [485, 2], 495, 503, 528, 542,
  ]],
];

const DASHES = [[585, 697], [713, 739], [751, 826], [842, 868], [874, 965]];

const Artboard = () => (
  <svg
    viewBox="0 0 1100 1100"
    className="aspect-square w-[1100px] shrink-0 bg-black"
    stroke="#fff"
    strokeWidth="1"
    shapeRendering="crispEdges"
    role="img"
    aria-label="Document canvas"
  >
    <path d="M260 129.5H705" strokeDasharray="4 4" />
    <path d="M543 550.5H969" strokeDasharray="4 4" />
    {COLUMNS.map(([x, y, n]) => (
      <path key={x} d={`M${x + 0.5} ${y}v${n * 16 - 15}`} strokeDasharray="1 15" />
    ))}
    {ROWS.map(([y, marks]) => (
      <path
        key={y}
        stroke="none"
        fill="#fff"
        d={marks.map((m) => (Array.isArray(m) ? `M${m[0]} ${y}h${m[1]}v1h-${m[1]}z` : `M${m} ${y}h1v1h-1z`)).join('')}
      />
    ))}
    {DASHES.map(([a, b]) => (
      <path key={a} d={`M${a} 734.5H${b}`} strokeDasharray="2 3 1 3" />
    ))}
  </svg>
);

/* ---------- properties panel ---------- */

const Section = ({ title, className = '', children }) => (
  <section className={`border-b border-[#424242] ${className}`}>
    <h3 className="flex h-[26px] items-center gap-[5px] pt-1 pl-[5px] font-bold text-[#f0f0f0]">
      <ChevronDown size={13} strokeWidth={1.5} className="text-[#c8c8c8]" />
      {title}
    </h3>
    {children}
  </section>
);

const SizeRow = ({ a, b }) => (
  <div className="flex h-[25px] items-center">
    <label htmlFor={`size${a}`} className="w-[22px] pr-[6px] text-right">{a}</label>
    <TextBox id={`size${a}`} value="2000 px" className="w-[54px]" />
    <label htmlFor={`pos${b}`} className="w-[27px] pr-[7px] text-right">{b}</label>
    <TextBox id={`pos${b}`} value="0 px" disabled className="w-[54px]" />
  </div>
);

const ActionButton = ({ children }) => (
  <button className="h-[23px] rounded-[3px] border border-[#606060] bg-[#454545] text-[#f2f2f2]">{children}</button>
);

const PropertiesPanel = () => (
  <section className="mt-[9px] flex w-[348px] shrink-0 flex-col self-start border-x border-b border-[#383838] bg-[#535353] text-[#d4d4d4]">
    <div className="h-[4px] bg-[#383838]" />
    <TabBar
      extra={
        <>
          <button aria-label="Collapse" className="-mr-1 text-[#d0d0d0]"><ChevronsRight size={16} strokeWidth={1.5} /></button>
          <span className="h-3 w-px bg-[#b4b4b4]" />
        </>
      }
    >
      <Tab className="px-[9px]">Info</Tab>
      <Tab active className="px-[9px]">Properties</Tab>
    </TabBar>
    <div className="flex h-[34px] items-center gap-[6px] border-b border-[#3e3e3e] pl-[9px]">
      <IconButton label="Document" active className="h-[23px] w-[23px]"><PageIcon /></IconButton>
      Document
    </div>
    <div className="flex">
      <div className="min-w-0 flex-1">
        <Section title="Canvas" className="pb-[5px]">
          <div className="flex items-center">
            <div className="flex w-[44px] justify-center"><ChainIcon /></div>
            <div>
              <SizeRow a="W" b="X" />
              <SizeRow a="H" b="Y" />
            </div>
          </div>
          <div className="mt-[6px] flex items-center gap-[5px] pl-[66px]">
            <IconButton label="Portrait" active className="h-[25px] w-[25px]"><PortraitIcon /></IconButton>
            <IconButton label="Landscape"><LandscapeIcon /></IconButton>
          </div>
          <p className="mt-[11px] pl-[67px] leading-[14px]">Resolution: 300 pixels/inch</p>
          <div className="mt-2 grid grid-cols-[60px_133px] items-center gap-x-[6px] gap-y-[2px]">
            <span className="pb-[2px] text-right">Mode</span>
            <Select label="Color mode" value="RGB Color" className="h-[23px]" />
            <Select label="Bit depth" value="16 Bits/Channel" className="col-start-2 h-[23px]" />
            <span className="pb-[2px] text-right">Fill</span>
            <div className="flex items-center gap-[3px] pt-[3px]">
              <button aria-label="Fill color" className="h-[18px] w-[19px] border border-[#3a3a3a] bg-black" />
              <Select label="Fill" value="Black" className="h-[23px] w-[111px]" />
            </div>
          </div>
        </Section>
        <Section title="Rulers & Grids" className="h-[68px]">
          <div className="flex items-center pt-[6px] pl-[13px]">
            <div className="flex w-[111px] gap-[15px]">
              <IconButton label="Rulers"><RulerIcon /></IconButton>
              <IconButton label="Grid"><GridIcon /></IconButton>
              <IconButton label="Transparency grid"><CheckerIcon /></IconButton>
            </div>
            <Select label="Ruler units" value="Pixels" className="h-[23px] w-[76px]" />
          </div>
        </Section>
        <Section title="Guides" className="h-[68px]">
          <div className="flex items-center pt-[5px] pl-[13px]">
            <div className="flex w-[111px] items-center">
              <IconButton label="Show guides" className="mr-[15px]">
                <span className="text-[#9a9a9a]"><GuidesIcon /></span>
              </IconButton>
              <IconButton label="Lock guides" className="mr-[11px]"><GuidesLockIcon /></IconButton>
              <IconButton label="Smart guides" active className="h-[25px] w-[25px]"><SmartGuidesIcon /></IconButton>
            </div>
            <Select label="Guide style" value="" className="h-[23px] w-[76px]">
              <span className="pointer-events-none absolute top-[11px] left-2 h-[2px] w-[43px] bg-[#c8c8c8]" />
            </Select>
          </div>
        </Section>
        <Section title="Quick Actions" className="border-b-0">
          <div className="grid grid-cols-[92px_92px] gap-[6px] pt-[5px] pl-[9px]">
            <ActionButton>Image Size</ActionButton>
            <ActionButton>Crop</ActionButton>
            <ActionButton>Trim</ActionButton>
            <ActionButton>Rotate</ActionButton>
          </div>
        </Section>
        <div className="h-[234px]" />
      </div>
      <div className="w-4 bg-[#4a4a4a]" />
    </div>
    <div className="h-[27px]" />
    <div className="flex h-[6px] items-center justify-center border-t border-[#3e3e3e]"><Grip /></div>
  </section>
);

/* ---------- collapsed docks ---------- */

const DockHeader = () => (
  <div className="flex h-3 items-center justify-end bg-[#424242] pr-[6px] text-[#d8d8d8]">
    <ChevronsLeft size={10} strokeWidth={3} />
  </div>
);

const DockGroup = ({ children }) => (
  <div className="flex flex-col items-center border-x border-b border-[#383838] bg-[#535353] pt-[2px] pr-[2px] pb-[3px]">
    <Grip />
    {children}
  </div>
);

const Docks = () => (
  <>
    <div className="w-10 shrink-0">
      <DockHeader />
      <DockGroup>
        <IconButton label="Info" className="mt-[2px] h-7 w-7"><InfoIcon /></IconButton>
        <IconButton label="Properties" active className="my-[1px] h-6 w-[26px]"><BricksIcon /></IconButton>
      </DockGroup>
    </div>
    <div className="w-10 shrink-0">
      <DockHeader />
      <DockGroup>
        <IconButton label="History" className="mt-[1px] h-[29px] w-7"><HistoryIcon /></IconButton>
        <IconButton label="Actions" className="h-[29px] w-7"><PlayIcon /></IconButton>
      </DockGroup>
      <DockGroup>
        <IconButton label="Clone source" className="h-[30px] w-7"><CloneSourceIcon /></IconButton>
      </DockGroup>
      <DockGroup>
        <IconButton label="Gradients" className="h-[32px] w-7"><GradientIcon id="gradDock" /></IconButton>
      </DockGroup>
    </div>
  </>
);

/* ---------- right column ---------- */

const Navigator = () => (
  <section className="shrink-0">
    <TabBar>
      <Tab className="pr-[11px] pl-[9px]">Histogram</Tab>
      <Tab active className="px-[9px]">Navigator</Tab>
    </TabBar>
    <div className="flex h-[399px] flex-col justify-center border-b border-[#3e3e3e] pr-[8px] pl-[5px]">
      <div className="aspect-square w-full border-2 border-[#d9575d] bg-black" />
    </div>
    <div className="flex h-[25px] items-center">
      <input aria-label="Zoom level" defaultValue="55%" className="h-full w-[58px] bg-[#454545] pl-[5px] text-[#f0f0f0] outline-none" />
      <button aria-label="Zoom out" className="ml-[6px] text-[#dcdcdc]"><Mountains w={11} h={5} /></button>
      <input
        type="range"
        aria-label="Zoom"
        defaultValue="44"
        className="ml-[12px] h-3 w-[108px] appearance-none bg-[linear-gradient(#747474,#747474)] bg-[length:100%_3px] bg-[position:0_0] bg-no-repeat [&::-webkit-slider-thumb]:mt-1 [&::-webkit-slider-thumb]:h-[10px] [&::-webkit-slider-thumb]:w-[10px] [&::-webkit-slider-thumb]:appearance-none [&::-webkit-slider-thumb]:bg-[#f0f0f0] [&::-webkit-slider-thumb]:[clip-path:polygon(50%_0,100%_50%,100%_100%,0_100%,0_50%)]"
      />
      <button aria-label="Zoom in" className="ml-[9px] text-[#dcdcdc]"><Mountains w={18} h={8} /></button>
    </div>
  </section>
);

const Adjustments = () => (
  <section className="shrink-0 border-t-3 border-[#3e3e3e]">
    <TabBar>
      <Tab active className="pr-2 pl-[9px]">Adjustments</Tab>
    </TabBar>
    <div className="h-[424px] border-b border-[#3e3e3e] pt-1">
      <p className="pl-2 text-[11px] leading-[14px] text-[#d4d4d4]">Add an adjustment</p>
      <div className="flex w-[206px] flex-col">
        {ADJUSTMENTS.map((row, i) => (
          <div key={i} className="flex h-[27px] items-center justify-center gap-[6px]">
            {row.map(([name, icon]) => (
              <IconButton key={name} label={name}>{icon}</IconButton>
            ))}
          </div>
        ))}
      </div>
    </div>
  </section>
);

const PercentBox = ({ label }) => (
  <div className="flex h-[17px]">
    <input aria-label={label} defaultValue="100%" className="w-9 border border-[#5f5f5f] bg-[#4b4b4b] pl-[5px] text-[#828282] outline-none" />
    <button aria-label={`${label} slider`} className="flex w-[15px] items-center justify-center border border-l-0 border-[#5f5f5f] text-[#777]">
      <ChevronDown size={9} />
    </button>
  </div>
);

const LayersPanel = () => (
  <section className="flex min-h-0 flex-1 flex-col border-t-2 border-[#3e3e3e] text-[#989898]">
    <TabBar>
      <Tab active className="pr-[9px] pl-[9px]">Layers</Tab>
      <Tab className="pr-[9px] pl-[9px]">Channels</Tab>
    </TabBar>
    <div className="flex h-[32px] shrink-0 items-center border-b border-[#3e3e3e] pt-[9px] pl-1">
      <Select label="Filter kind" value="Kind" dim pad="pl-[21px]" className="h-[22px] w-[87px]">
        <span className="pointer-events-none absolute top-[6px] left-2 text-[#c4c4c4]"><MagnifierIcon size={11} /></span>
      </Select>
      <div className="ml-[10px] flex items-center gap-[12px] pb-1 [&_button]:text-[#b0b0b0]">
        <IconButton label="Pixel layers"><PictureIcon /></IconButton>
        <IconButton label="Adjustment layers"><HalfCircleIcon /></IconButton>
        <IconButton label="Type layers"><TypeIcon /></IconButton>
        <IconButton label="Shape layers"><ShapeIcon /></IconButton>
        <IconButton label="Smart objects"><SmartObjectIcon /></IconButton>
      </div>
      <button aria-label="Toggle filter" className="mb-[6px] ml-[11px] flex h-4 w-[9px] items-start rounded-full bg-[#474747]">
        <span className="block h-[9px] w-[9px] rounded-full bg-[#b4b4b4]" />
      </button>
    </div>
    <div className="flex h-7 shrink-0 items-center border-b border-[#3e3e3e] pt-[5px] pl-1">
      <Select label="Blend mode" value="Normal" dim className="h-[22px] w-[129px]" />
      <div className="flex items-center pb-[2px]">
        <span className="w-[46px] pl-[6px]">Opacity:</span>
        <PercentBox label="Opacity" />
      </div>
    </div>
    <div className="flex h-[31px] shrink-0 items-center pl-[6px]">
      <span className="w-[32px]">Lock:</span>
      <div className="flex flex-1 items-center gap-[9px] [&_button]:text-[#b0b0b0]">
        <IconButton label="Lock transparent pixels"><Checker /></IconButton>
        <IconButton label="Lock image pixels"><BrushIcon size={14} /></IconButton>
        <IconButton label="Lock position"><span className="-mx-[3px]"><MoveIcon /></span></IconButton>
        <IconButton label="Lock artboard nesting"><ArtboardLockIcon /></IconButton>
        <IconButton label="Lock all"><LockSolid /></IconButton>
      </div>
      <span className="pr-[5px]">Fill:</span>
      <PercentBox label="Fill" />
      <div className="w-[18px]" />
    </div>
    <div className="flex min-h-0 flex-1 bg-[#4d4d4d]">
      <div className="flex-1">
        <div className="flex h-10 border-b border-[#424242]">
          <button aria-label="Layer visibility" className="flex w-[30px] items-center justify-center bg-[#535353] text-[#e4e4e4]">
            <EyeIcon />
          </button>
          <div className="flex flex-1 items-center bg-[#6a6a6a] pl-1 text-[#f4f4f4]">
            <div className="h-8 w-8 border border-[#3a3a3a] bg-black" />
            <span className="ml-[10px] flex-1 italic">Background</span>
            <span className="pr-[15px]"><LockOutline /></span>
          </div>
        </div>
      </div>
      <div className="w-[17px] bg-[#4a4a4a]" />
    </div>
    <footer className="flex h-[26px] shrink-0 items-center gap-[11px] border-t border-[#3e3e3e] pb-[2px] pl-[44px]">
      <button aria-label="Link layers" className="text-[#8a8a8a]">
        <Svg w={16} h={12}>
          <path d="M7 3H4.5a3 3 0 0 0 0 6H7M9 3h2.5a3 3 0 0 1 0 6H9M5 6h6" />
        </Svg>
      </button>
      <button aria-label="Layer style" className="w-4 font-['Open_Sans',sans-serif] text-[12px] leading-4 text-[#8f8f8f] italic">fx</button>
      <IconButton label="Add mask">
        <Svg w={14} h={12}>
          <rect x=".5" y="1" width="13" height="10" fill="currentColor" stroke="none" />
          <circle cx="7" cy="6" r="3" fill="#535353" stroke="none" />
        </Svg>
      </IconButton>
      <IconButton label="New adjustment layer" corner className="h-5 w-[18px]">
        <HalfCircleIcon />
      </IconButton>
      <IconButton label="New group" className="w-4">
        <Svg w={14} h={12}>
          <path d="M1 1h5l1 1.5h6V11H1z" fill="currentColor" stroke="none" />
          <path d="M1 3.5h12" stroke="#535353" strokeWidth=".8" />
        </Svg>
      </IconButton>
      <IconButton label="New layer" className="w-4">
        <Svg w={12} h={12}>
          <rect x=".7" y=".7" width="10.6" height="10.6" />
          <path d="M6 3.2v5.6M3.2 6h5.6" />
        </Svg>
      </IconButton>
      <button aria-label="Delete layer" className="text-[#8f8f8f]">
        <Svg w={12} h={13}>
          <path d="M.5 3h11M4 3V1.2h4V3M1.8 3l.5 9.3h7.4l.5-9.3M4.5 5v5.5M6 5v5.5M7.5 5v5.5" strokeWidth="1.1" />
        </Svg>
      </button>
    </footer>
    <div className="flex h-[8px] shrink-0 justify-center border-t border-[#3a3a3a] pt-[1px]"><Grip /></div>
  </section>
);

const RightColumn = () => (
  <aside className="flex w-[249px] shrink-0 flex-col border-l border-[#383838] bg-[#535353]">
    <div className="flex h-3 shrink-0 items-center justify-end bg-[#424242] pr-[6px] text-[#d8d8d8]">
      <ChevronsRight size={10} strokeWidth={3} />
    </div>
    <Navigator />
    <Adjustments />
    <LayersPanel />
  </aside>
);

export default function App() {
  return (
    <div className="flex h-screen flex-col overflow-hidden bg-[#282828] font-['Lato',sans-serif] text-[10px] leading-[14px]">
      <MenuBar />
      <OptionsBar />
      <div className="flex min-h-0 flex-1">
        <ToolBar />
        <main className="flex min-w-0 flex-1 items-center justify-end pt-[34px] pr-[84px]">
          <Artboard />
        </main>
        <PropertiesPanel />
        <Docks />
        <RightColumn />
      </div>
    </div>
  );
}
